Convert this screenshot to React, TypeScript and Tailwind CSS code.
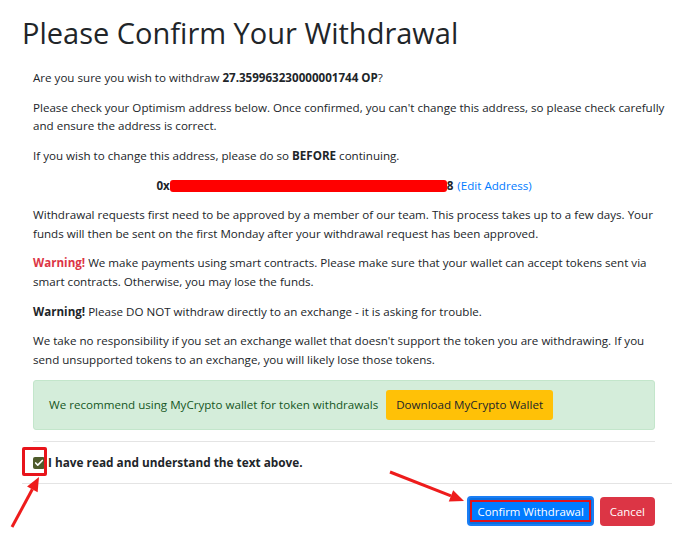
import React from 'react'
import { Check } from 'lucide-react'

const Arrow = ({ x1, y1, x2, y2 }: { x1: number; y1: number; x2: number; y2: number }) => {
  const a = Math.atan2(y2 - y1, x2 - x1)
  const len = 14
  const w = 6
  const bx = x2 - Math.cos(a) * len
  const by = y2 - Math.sin(a) * len
  const p1 = `${bx + Math.sin(a) * w},${by - Math.cos(a) * w}`
  const p2 = `${bx - Math.sin(a) * w},${by + Math.cos(a) * w}`
  return (
    <g>
      <line x1={x1} y1={y1} x2={bx} y2={by} stroke="#ee1c1c" strokeWidth={3} />
      <polygon points={`${x2},${y2} ${p1} ${p2}`} fill="#ee1c1c" />
    </g>
  )
}

export default function App() {
  return (
    <div className="relative w-[692px] h-[551px] overflow-hidden bg-white text-[#212529] font-['Open_Sans',sans-serif]">
      {/* Header */}
      <div className="pl-[22px] pt-[14px]">
        <h1 className="text-[29px] leading-[38px] font-medium">Please Confirm Your Withdrawal</h1>
      </div>

      {/* Body */}
      <div className="mx-[33px] w-[622px] pt-[17px] text-[11.6px] leading-[18.5px]">
        <p className="mb-[11.2px] whitespace-nowrap">
          Are you sure you wish to withdraw <b>27.359963230000001744 OP</b>?
        </p>
        <p className="mb-[11.2px] whitespace-nowrap">
          Please check your Optimism address below. Once confirmed, you can't change this address, so please check carefully
          <br />
          and ensure the address is correct.
        </p>
        <p className="mb-[11.2px] whitespace-nowrap">
          If you wish to change this address, please do so <b>BEFORE</b> continuing.
        </p>
        <p className="mb-[11.2px] flex items-center justify-center whitespace-nowrap">
          <b>0x</b>
          <span className="inline-block w-[277px] h-[12px] bg-[#ff0000] rounded-[3px]" />
          <b>8</b>
          <span className="ml-[4px] text-[#007bff]">(Edit Address)</span>
        </p>
        <p className="mb-[11.2px] whitespace-nowrap">
          Withdrawal requests first need to be approved by a member of our team. This process takes up to a few days. Your
          <br />
          funds will then be sent on the first Monday after your withdrawal request has been approved.
        </p>
        <p className="mb-[11.2px] whitespace-nowrap">
          <b className="text-[#dc3545]">Warning!</b> We make payments using smart contracts. Please make sure that your wallet can accept tokens sent via
          <br />
          smart contracts. Otherwise, you may lose the funds.
        </p>
        <p className="mb-[11.2px] whitespace-nowrap">
          <b>Warning!</b> Please DO NOT withdraw directly to an exchange - it is asking for trouble.
        </p>
        <p className="mb-[11px] whitespace-nowrap">
          We take no responsibility if you set an exchange wallet that doesn't support the token you are withdrawing. If you
          <br />
          send unsupported tokens to an exchange, you will likely lose those tokens.
        </p>

        <div className="flex items-center gap-[8px] h-[50px] px-[15px] rounded-[3px] border border-[#c3e6cb] bg-[#d4edda] text-[#155724]">
          <span className="whitespace-nowrap">We recommend using MyCrypto wallet for token withdrawals</span>
          <span className="flex items-center h-[30px] px-[10px] rounded-[3px] bg-[#ffc107] text-[#212529] whitespace-nowrap">
            Download MyCrypto Wallet
          </span>
        </div>

        <div className="mt-[11px] border-t border-[#e4e4e4]" />
      </div>

      {/* Checkbox row */}
      <div className="flex items-center h-[41px] pl-[33px]">
        <span className="flex items-center justify-center w-[12px] h-[12px] rounded-[2px] bg-[#4f5b2b]">
          <Check className="w-[10px] h-[10px] text-white" strokeWidth={4} />
        </span>
        <span className="ml-[3px] text-[11.8px] font-bold whitespace-nowrap">I have read and understand the text above.</span>
      </div>

      {/* Footer */}
      <div className="ml-[22px] mr-[20px] border-t border-[#e4e4e4] flex justify-end items-center gap-[6px] pt-[12px] pr-[17px] text-[11.4px]">
        <span className="flex items-center h-[30px] px-[1px] rounded-[4px] bg-[#0b6fe0] border-[2px] border-[#1a7ef5]">
          <span className="flex items-center h-[22px] px-[5px] border-[2px] border-[#e0131b] bg-[#007bff] text-white whitespace-nowrap">
            Confirm Withdrawal
          </span>
        </span>
        <span className="flex items-center h-[29px] px-[10px] rounded-[4px] bg-[#dc3545] text-white">Cancel</span>
      </div>

      {/* Annotation: red box around checkbox */}
      <div className="absolute left-[22px] top-[447px] w-[25px] h-[29px] rounded-[2px] border-[3px] border-[#e8141b]" />

      {/* Annotation arrows */}
      <svg className="absolute inset-0 pointer-events-none" width={692} height={551}>
        <Arrow x1={12} y1={527} x2={39} y2={477} />
        <Arrow x1={390} y1={472} x2={464} y2={501} />
      </svg>
    </div>
  )
}
